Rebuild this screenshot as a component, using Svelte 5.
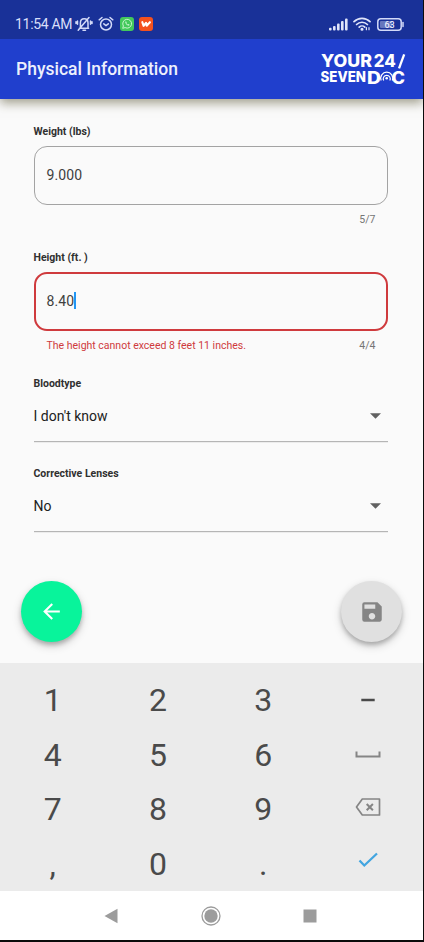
<script>
  const rows = [
    ['1', '2', '3', 'minus'],
    ['4', '5', '6', 'space'],
    ['7', '8', '9', 'delete'],
    [',', '0', '.', 'done']
  ];
  const selects = [
    { label: 'Bloodtype', value: "I don't know" },
    { label: 'Corrective Lenses', value: 'No' }
  ];
</script>

<div class="screen">
  <header>
    <div class="status">
      <span class="time">11:54 AM</span>
      <svg class="bell" width="18" height="16" viewBox="0 0 18 16" fill="none" stroke="#d3daf8" stroke-width="1.5" stroke-linecap="round">
        <path d="M4.400 12.300h9.200M5.400 11.800V7c0-2.500 1.500-4.200 3.800-4.200S13 4.500 13 7v4.800M8 14.300h2.500M3.200 14.200L14 1.500M2.500 5v3.200M1 5.800v1.600M15.500 5v3.200M17 5.800v1.600" />
      </svg>
      <svg class="alarm" width="16" height="16" viewBox="0 0 16 16" fill="none" stroke="#d3daf8" stroke-width="1.5" stroke-linecap="round">
        <circle cx="8" cy="8.500" r="5.500" />
        <path d="M1.200 3.800L4 1.500M14.800 3.800L12 1.500M5.800 7.800L8 9.600l2.300-1.800" />
      </svg>
      <svg class="chat" width="14" height="14" viewBox="0 0 14 14">
        <rect width="14" height="14" rx="3" fill="#43c95b" />
        <path d="M2.700 11.300l.7-2.300a4.400 4.400 0 1 1 1.700 1.600z" fill="none" stroke="#c9f5cf" stroke-width="1" />
        <path d="M5.300 4.600c-.5 1.800 2 4.400 3.900 4l.3-1-1.200-.6-.6.500c-.7-.3-1.100-.8-1.400-1.400l.5-.5-.6-1.200z" fill="#c9f5cf" />
      </svg>
      <svg class="wapp" width="14" height="14" viewBox="0 0 14 14">
        <rect width="14" height="14" rx="3" fill="#f4511e" />
        <path d="M3.300 5.200l1.300 3.600 2.400-3 .7 3L10.900 5.200" fill="none" stroke="#fff" stroke-width="2.100" stroke-linejoin="round" stroke-linecap="round" />
      </svg>
      <svg class="signal" width="19" height="13" viewBox="0 0 19 13" fill="#e0e5fa">
        <rect x="0" y="9.800" width="2.600" height="2.700" rx="1" />
        <rect x="4" y="8" width="2.600" height="4.500" rx="1" />
        <rect x="8" y="5.500" width="2.600" height="7" rx="1" />
        <rect x="12" y="3" width="2.600" height="9.500" rx="1" />
        <rect x="16" y=".5" width="2.600" height="12" rx="1" />
      </svg>
      <svg class="wifi" width="18" height="14" viewBox="0 0 18 14" fill="none" stroke="#e0e5fa" stroke-width="1.700" stroke-linecap="round">
        <path d="M1 4.700C5.500.200 12.500.200 17 4.700M3.600 7.500c3-3 7.800-3 10.800 0M6.200 10.100c1.500-1.500 4.100-1.500 5.600 0" />
        <circle cx="9" cy="12.300" r=".7" fill="#e0e5fa" />
        <path d="M13.400 10.700v2M16 10.700v2" stroke-width="1.200" />
      </svg>
      <svg class="battery" width="27" height="13" viewBox="0 0 27 13">
        <rect x=".8" y=".8" width="23.400" height="11.400" rx="3" fill="none" stroke="#d3daf8" stroke-width="1.500" />
        <rect x="3" y="3" width="12" height="7" rx="1" fill="#6677bd" />
        <path d="M26 4.500v4" stroke="#d3daf8" stroke-width="1.500" stroke-linecap="round" />
        <text x="12.500" y="9.700" text-anchor="middle" font-size="9" font-weight="500" fill="#e6eafc">63</text>
      </svg>
    </div>
    <div class="bar">
      <h1>Physical Information</h1>
      <svg class="logo" width="88" height="44" viewBox="0 -4 88 44" fill="#fff">
        <text x="1" y="16.300" font-size="17" textLength="51" lengthAdjust="spacingAndGlyphs">YOUR</text>
        <text x="53.800" y="16.300" font-size="17" textLength="22" lengthAdjust="spacingAndGlyphs">24</text>
        <path d="M84.200 3.300L79 17.300" stroke="#fff" stroke-width="2.300" />
        <text x="0.500" y="31" font-size="14" textLength="45.500" lengthAdjust="spacingAndGlyphs">SEVEN</text>
        <text x="47" y="32.800" font-size="17" textLength="14" lengthAdjust="spacingAndGlyphs">D</text>
        <text x="71.500" y="32.800" font-size="17" textLength="13.500" lengthAdjust="spacingAndGlyphs">C</text>
        <path d="M61.200 29.500A6 6 0 1 1 72.300 29.500M63.700 29.500A3.500 3.500 0 1 1 69.800 29.500" fill="none" stroke="#fff" stroke-width="1.200" />
        <circle cx="66.700" cy="27.300" r="1.300" />
      </svg>
    </div>
  </header>

  <main>
    <label class="caption" for="weight">Weight (lbs)</label>
    <div class="box" id="weight"><span>9.000</span></div>
    <div class="helper"><span></span><span class="count">5/7</span></div>

    <label class="caption second" for="height">Height (ft. )</label>
    <div class="box invalid" id="height"><span>8.40</span><i class="caret"></i></div>
    <div class="helper"><span class="error">The height cannot exceed 8 feet 11 inches.</span><span class="count">4/4</span></div>

    {#each selects as s}
      <div class="field">
        <div class="caption">{s.label}</div>
        <div class="select">
          <span>{s.value}</span>
          <svg width="11" height="6" viewBox="0 0 11 6"><path d="M0 .3h11L5.500 5.800z" fill="#616161" /></svg>
        </div>
      </div>
    {/each}

    <div class="actions">
      <button class="fab back" aria-label="Back">
        <svg width="25" height="25" viewBox="0 0 24 24"><path d="M20 11H7.830l5.590-5.590L12 4l-8 8 8 8 1.410-1.410L7.830 13H20v-2z" fill="#fff" /></svg>
      </button>
      <button class="fab save" aria-label="Save">
        <svg width="26" height="26" viewBox="0 0 24 24"><path d="M17 3H5a2 2 0 0 0-2 2v14a2 2 0 0 0 2 2h14c1.100 0 2-.9 2-2V7l-4-4zm-5 16c-1.660 0-3-1.340-3-3s1.340-3 3-3 3 1.340 3 3-1.340 3-3 3zm3-10H5V5h10v4z" fill="#858585" /></svg>
      </button>
    </div>
  </main>

  <section class="keypad">
    {#each rows as row}
      {#each row as key}
        <div class="key">
          {#if key === 'minus'}
            <svg width="26" height="20" viewBox="0 0 26 20"><path d="M6.300 10h13.400" stroke="#4a4a4a" stroke-width="2.500" /></svg>
          {:else if key === 'space'}
            <svg width="26" height="20" viewBox="0 0 26 20"><path d="M1.500 6.500v5h23v-5" fill="none" stroke="#858585" stroke-width="2" /></svg>
          {:else if key === 'delete'}
            <svg class="up" width="26" height="20" viewBox="0 0 26 20" fill="none" stroke="#858585" stroke-width="1.700" stroke-linejoin="round">
              <path d="M7.300 2h17.200v16H7.300L1.500 10z" />
              <path d="M11.700 7l6.200 6.200M17.900 7l-6.200 6.200" stroke-width="2" />
            </svg>
          {:else if key === 'done'}
            <svg class="high" width="26" height="20" viewBox="0 0 26 20"><path d="M4.500 10.500l4.800 5L22 3.500" fill="none" stroke="#42a5e0" stroke-width="2.300" /></svg>
          {:else}
            {key}
          {/if}
        </div>
      {/each}
    {/each}
  </section>

  <nav>
    <svg width="14" height="16" viewBox="0 0 14 16"><path d="M13.500.8v14.400L.5 8z" fill="#9c9c9c" /></svg>
    <svg width="20" height="20" viewBox="0 0 20 20"><circle cx="10" cy="10" r="9" fill="none" stroke="#9c9c9c" stroke-width="1.300" /><circle cx="10" cy="10" r="6.700" fill="#9c9c9c" /></svg>
    <svg width="14" height="14" viewBox="0 0 14 14"><rect x=".5" y=".5" width="13" height="13" fill="#9c9c9c" /></svg>
  </nav>
</div>

<style>
  :global(body) { background: #0b0b0b; }
  .screen {
    box-sizing: border-box;
    width: 424px;
    height: 942px;
    padding: 0 1px 2px 0;
    background: #0b0b0b;
    display: flex;
    flex-direction: column;
    font-family: Roboto, "Liberation Sans", sans-serif;
    overflow: hidden;
  }
  header {
    position: relative;
    height: 99px;
    background: #203fcd;
    box-shadow: 0 4px 10px rgba(70, 65, 30, .5);
    clip-path: inset(0 0 -20px 0);
  }
  .status {
    box-sizing: border-box;
    height: 39px;
    padding: 9px 19px 0 15px;
    background: #193198;
    display: flex;
    align-items: center;
  }
  .time { width: 60px; font-size: 14px; line-height: 30px; letter-spacing: -.3px; color: #d9dff9; white-space: nowrap; }
  .alarm { margin-left: 5px; }
  .chat { margin-left: 6px; }
  .wapp { margin-left: 5px; }
  .signal { margin-left: auto; }
  .wifi { margin-left: 5px; }
  .battery { margin-left: 6px; }
  .bar {
    height: 60px;
    padding: 0 15px 0 16px;
    display: flex;
    align-items: center;
    justify-content: space-between;
  }
  h1 { margin: 0; font-size: 17.500px; font-weight: 500; color: #edf0fd; letter-spacing: 0; }
  .logo { font-family: Inter, sans-serif; font-weight: 800; overflow: visible; }
  main {
    flex: none;
    box-sizing: border-box;
    height: 564px;
    padding: 26px 35px 0 34px;
    background: #fafafa;
  }
  .caption { display: block; height: 14px; line-height: 14px; font-size: 10.500px; font-weight: 700; color: #303030; margin-left: -.5px; }
  .box {
    box-sizing: border-box;
    height: 59px;
    margin-top: 7px;
    padding: 0 11.500px 2px;
    border: 1px solid #a3a3a3;
    border-radius: 13px;
    display: flex;
    align-items: center;
    font-size: 14px;
    letter-spacing: .1px;
    color: #404040;
  }
  .invalid { border: 2px solid #cf3a3d; padding: 0 10.500px 2px; }
  .caret { width: 2px; height: 17px; background: #2196f3; }
  .helper {
    display: flex;
    justify-content: space-between;
    height: 14px;
    margin-top: 8px;
    padding: 0 12.500px;
    font-size: 10.500px;
    line-height: 14px;
  }
  .error { color: #cf3a3d; }
  .count { color: #757575; }
  .second { margin-top: 24px; }
  .field { height: 65.500px; margin-top: 24px; }
  .select {
    box-sizing: border-box;
    height: 51px;
    padding: 0 7px 0 0;
    border-bottom: 1px solid #b5b5b5;
    box-shadow: 0 1px 0 #ececec;
    display: flex;
    align-items: center;
    justify-content: space-between;
    font-size: 14px;
    color: #212121;
  }
  .select span { margin-left: -.5px; }
  .actions { display: flex; justify-content: space-between; margin: 49px -14px 0 -13px; }
  .fab {
    width: 61px;
    height: 61px;
    padding: 0;
    border: 0;
    border-radius: 50%;
    display: flex;
    align-items: center;
    justify-content: center;
    box-shadow: 0 3px 4px rgba(0, 0, 0, .2), 0 4px 10px rgba(0, 0, 0, .18);
  }
  .back { background: #08f49b; }
  .save { background: #e0e0e0; }
  .keypad {
    flex: none;
    box-sizing: border-box;
    height: 228px;
    padding: 10px 2px 0 0;
    background: #ebebeb;
    display: grid;
    grid-template-columns: repeat(4, 1fr);
    grid-template-rows: repeat(4, 54.500px);
  }
  .key { display: flex; align-items: center; justify-content: center; font-size: 32px; line-height: 54px; color: #4a4a4a; }
  .up { margin-bottom: 4px; }
  .high { margin-bottom: 8px; }
  nav {
    flex: 1;
    background: #fff;
    display: flex;
    align-items: center;
    justify-content: space-between;
    padding: 0 106px 0 104px;
  }
</style>
